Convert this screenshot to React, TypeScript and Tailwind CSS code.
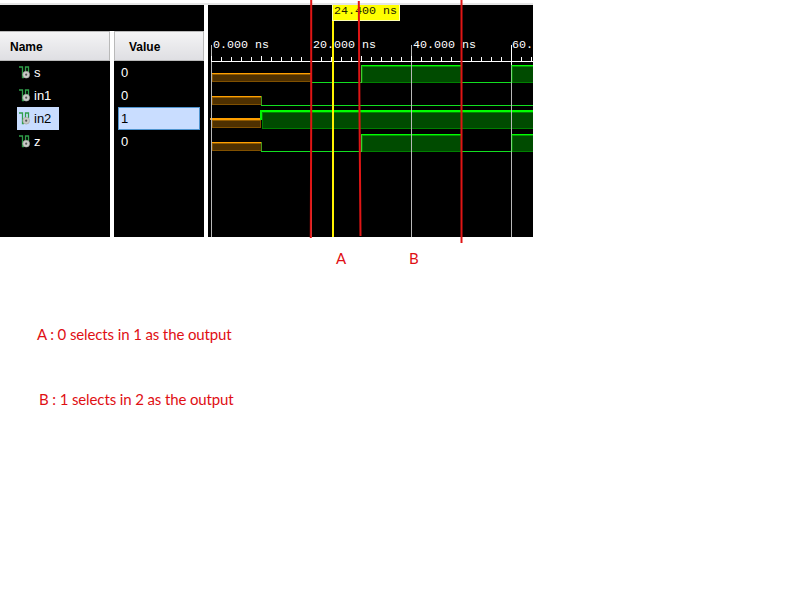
const signals = [
  { name: "s", value: "0", selected: false },
  { name: "in1", value: "0", selected: false },
  { name: "in2", value: "1", selected: true },
  { name: "z", value: "0", selected: false },
];

function SignalIcon() {
  return (
    <svg width="12" height="13" viewBox="0 0 12 13" className="shrink-0">
      <path d="M0 1H3.5V11.5H5M6.5 7V1H9.5V6" fill="none" stroke="#2f9e49" strokeWidth="1.3" />
      <circle cx="7.2" cy="8.7" r="3.4" fill="#c9cbc7" stroke="#9da09b" strokeWidth=".6" />
      <circle cx="7.2" cy="8.7" r="1.1" fill="#555" />
    </svg>
  );
}

function Unknown({ x2, y }: { x2: number; y: number }) {
  return (
    <g>
      <rect x="212" y={y} width={x2 - 212} height="9" fill="#4e3000" />
      <rect x="212.5" y={y + 0.5} width={x2 - 213} height="8" fill="none" stroke="#805000" />
      <rect x="212" y={y} width={x2 - 212} height="1" fill="#ffa000" />
      <rect x="212" y={y + 1} width={x2 - 212} height="1" fill="#925b00" />
    </g>
  );
}

function High({ x1, x2, y }: { x1: number; x2: number; y: number }) {
  return (
    <g>
      <rect x={x1} y={y} width={x2 - x1} height="18" fill="#004b00" />
      <rect x={x1} y={y + 17} width={x2 - x1} height="1" fill="#008000" />
      <rect x={x1 + 1} y={y + 1} width={x2 - x1 - 1} height="1" fill="#009600" />
      <rect x={x1} y={y} width={x2 - x1} height="1" fill="#00ff00" />
      <rect x={x1} y={y} width="1" height="18" fill="#45c935" />
      <rect x={x1 + 1} y={y + 2} width="1" height="15" fill="#007800" />
    </g>
  );
}

function Low({ x1, x2, y }: { x1: number; x2: number; y: number }) {
  return <rect x={x1} y={y} width={x2 - x1} height="1" fill="#12df20" />;
}

function Waveform() {
  const ticks = Array.from({ length: 33 }, (_, i) => i);
  return (
    <svg width="325" height="232" viewBox="208 5 325 232" shapeRendering="crispEdges" className="block bg-black">
      <Unknown x2={311} y={73} />
      <Low x1={311} x2={361} y={82} />
      <High x1={361} x2={461} y={65} />
      <Low x1={461} x2={511} y={82} />
      <High x1={511} x2={534} y={65} />

      <Unknown x2={262} y={96} />
      <rect x="261" y="96" width="1" height="10" fill="#469719" />
      <Low x1={261} x2={533} y={105} />

      <Unknown x2={261} y={119} />
      <rect x="210" y="118" width="51" height="2" fill="#ffa000" />
      <rect x="262" y="112" width="271" height="17" fill="#004b00" />
      <rect x="262" y="128" width="271" height="1" fill="#008000" />
      <rect x="262" y="112" width="271" height="1" fill="#008500" />
      <rect x="262" y="113" width="1" height="15" fill="#008000" />
      <rect x="260" y="110" width="273" height="2" fill="#00ff00" />
      <rect x="260" y="110" width="2" height="10" fill="#00f500" />

      <Unknown x2={262} y={142} />
      <rect x="261" y="142" width="1" height="10" fill="#469719" />
      <Low x1={261} x2={361} y={151} />
      <High x1={361} x2={461} y={134} />
      <Low x1={461} x2={511} y={151} />
      <High x1={511} x2={534} y={134} />

      <g fill="#b8b8b8">
        {[211, 311, 411].map((x) => (
          <rect key={x} x={x} y="45" width="1" height="192" />
        ))}
        <rect x="511" y="45" width="1" height="20" fill="#fff" />
        <rect x="511" y="65" width="1" height="18" fill="#7bd77b" />
        <rect x="511" y="83" width="1" height="51" />
        <rect x="511" y="134" width="1" height="18" fill="#7bd77b" />
        <rect x="511" y="152" width="1" height="85" />
      </g>
      <rect x="211" y="61" width="322" height="1" fill="#fff" />
      {ticks.map((i) => (
        <rect key={i} x={211 + i * 10} y={i % 5 ? 57 : 56} width="1" height="5" fill="#fff" />
      ))}

      <g fontFamily="'Liberation Mono', monospace" fontSize="11.67" fill="#fff">
        <text x="213" y="48">0.000 ns</text>
        <text x="313" y="48">20.000 ns</text>
        <text x="413" y="48">40.000 ns</text>
        <text x="512" y="48">60.</text>
      </g>
      <rect x="332" y="20" width="2" height="217" fill="#fff200" />
      <rect x="332.5" y="4.5" width="67" height="16" fill="#ffff00" stroke="#ffffb0" />
      <text x="334" y="14" fontFamily="'Liberation Mono', monospace" fontSize="11.67" fill="#222200">
        24.400 ns
      </text>
    </svg>
  );
}

export default function App() {
  return (
    <main className="relative h-[600px] w-[800px] overflow-hidden bg-white font-['Liberation_Sans',Arial,sans-serif] text-black">
      <div className="mt-[3px] h-0.5 w-[533px] bg-[#e6e6e6]" />
      <section className="flex h-[232px] w-[533px] gap-1">
        <div className="flex w-[204px] flex-col bg-black">
          <div className="h-[26px] shrink-0" />
          <div className="flex flex-1 gap-1 bg-white">
            <div className="w-[110px] bg-black">
              <div className="flex h-[30px] items-center border-t border-r border-b border-[#b9b9b9] bg-linear-to-b from-[#f4f4f5] to-[#dfdfe3] pt-0.5 pl-2.5 text-xs font-bold">
                Name
              </div>
              <div>
                {signals.map((s) => (
                  <div
                    key={s.name}
                    className={`ml-[17px] flex h-[23px] w-[42px] items-center gap-[3px] pl-0.5 text-[13px] leading-none ${
                      s.selected ? "bg-[#c9ddff] text-black" : "text-white"
                    }`}
                  >
                    <SignalIcon />
                    {s.name}
                  </div>
                ))}
              </div>
            </div>
            <div className="w-[90px] bg-black">
              <div className="flex h-[30px] items-center border border-[#b9b9b9] bg-linear-to-b from-[#f4f4f5] to-[#dfdfe3] pt-0.5 pl-3.5 text-xs font-bold">
                Value
              </div>
              <div>
                {signals.map((s) => (
                  <div
                    key={s.name}
                    className={`mx-1 flex h-[23px] items-center border pl-0.5 text-[13px] leading-none ${
                      s.selected ? "border-[#4f94cf] bg-[#c9ddff] text-black" : "border-transparent text-white"
                    }`}
                  >
                    {s.value}
                  </div>
                ))}
              </div>
            </div>
          </div>
        </div>
        <Waveform />
      </section>

      <div className="font-[Lato,Calibri,sans-serif] text-[15px] leading-5 tracking-[-0.12px] text-[#e00f14]">
        <div className="flex gap-[63px] pt-[11px] pl-[336px]">
          <span>A</span>
          <span>B</span>
        </div>
        <p className="mt-[56px] ml-[37px] whitespace-nowrap">A : 0 selects in 1 as the output</p>
        <p className="mt-[45px] ml-[39px] whitespace-nowrap">B : 1 selects in 2 as the output</p>
      </div>

      {/* Hand-drawn interval markers that run over the waveform and past its edges */}
      <svg width="800" height="250" viewBox="0 0 800 250" className="pointer-events-none absolute top-0 left-0">
        <g fill="none" stroke="#e01515" strokeWidth="2">
          <path d="M311.2 0V120L310.8 238" />
          <path d="M358.8 1L359.4 100L360.5 236" />
          <path d="M461.5 0V243" />
        </g>
      </svg>
    </main>
  );
}
